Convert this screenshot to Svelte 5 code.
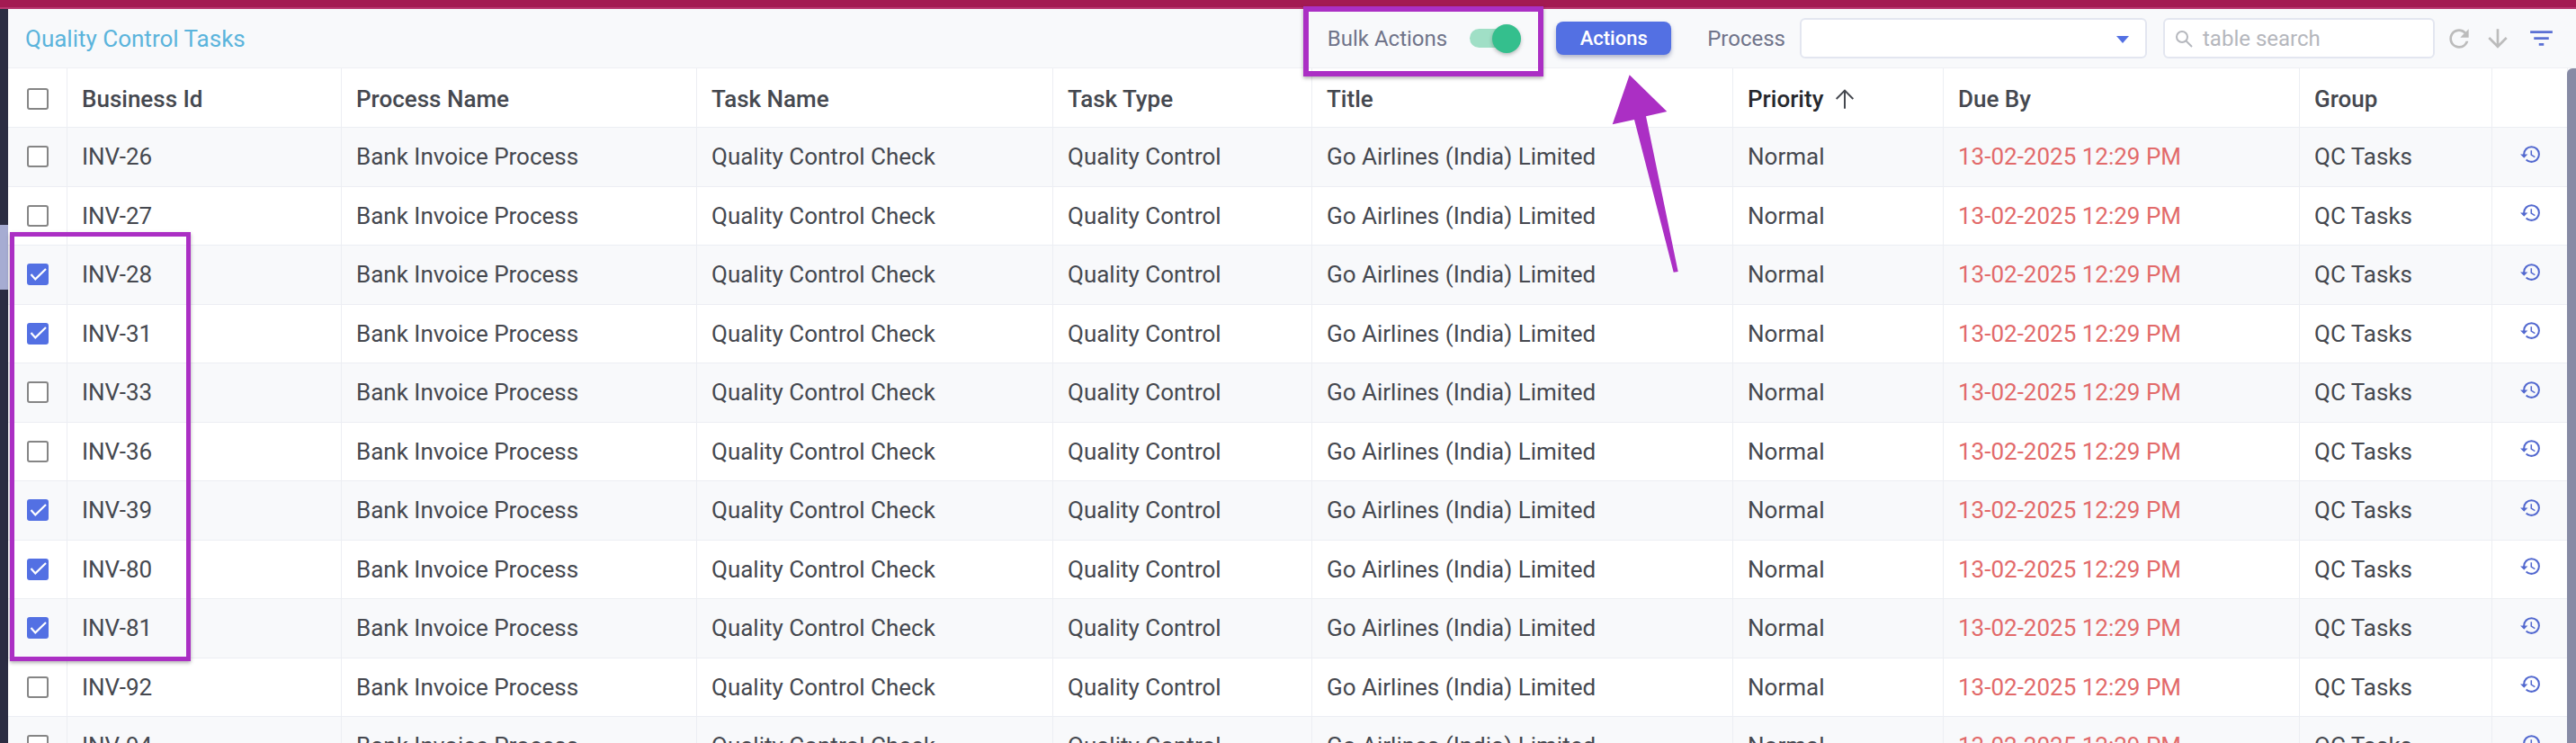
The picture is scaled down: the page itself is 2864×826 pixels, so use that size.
<script>
  const ids = ['INV-26','INV-27','INV-28','INV-31','INV-33','INV-36','INV-39','INV-80','INV-81','INV-92','INV-94'];
  const checked = new Set(['INV-28','INV-31','INV-39','INV-80','INV-81']);
  const heads = ['Business Id','Process Name','Task Name','Task Type','Title','Priority','Due By','Group',''];
</script>

<div class="page">
  <div class="topbar"></div>
  <div class="body">
    <div class="strip"></div>
    <div class="main">
      <div class="toolbar">
        <span class="heading">Quality Control Tasks</span>
        <div class="tools">
          <span class="lbl bulk">Bulk Actions</span>
          <span class="toggle"><i></i></span>
          <button class="action">Actions</button>
          <span class="lbl">Process</span>
          <div class="field select"><span class="caret"></span></div>
          <div class="field search">
            <svg viewBox="0 0 20 20" width="20" height="20" fill="none" stroke="#b5b7bd" stroke-width="2"><circle cx="8" cy="8" r="6"/><path d="M12.5 12.5 19 19"/></svg>
            <span>table search</span>
          </div>
          <svg class="ic" viewBox="0 0 24 24" width="32" height="32" fill="#bcbcbc"><path d="M17.65 6.35A7.958 7.958 0 0 0 12 4c-4.42 0-7.99 3.58-7.99 8s3.57 8 7.99 8c3.73 0 6.84-2.55 7.73-6h-2.08A5.99 5.99 0 0 1 12 18c-3.31 0-6-2.69-6-6s2.69-6 6-6c1.66 0 3.14.69 4.22 1.78L13 11h7V4l-2.35 2.35z"/></svg>
          <svg class="ic" viewBox="0 0 24 24" width="32" height="32" fill="#bcbcbc"><path d="M20 12l-1.41-1.41L13 16.17V4h-2v12.17l-5.58-5.59L4 12l8 8 8-8z"/></svg>
          <svg class="ic filter" viewBox="0 0 24 24" width="33" height="33" fill="#5a70d4"><path d="M10 18h4v-2h-4v2zM3 6v2h18V6H3zm3 7h12v-2H6v2z"/></svg>
        </div>
      </div>
      <div class="table">
        <div class="row head">
          <div class="cell chk"><span class="box"></span></div>
          {#each heads as h}
            <div class="cell" class:sorted={h === 'Priority'}>
              {h}
              {#if h === 'Priority'}
                <svg viewBox="0 0 24 24" width="32" height="32" fill="none" stroke="#45484f" stroke-width="1.5"><path d="M12 20V5M5 12l7-7 7 7"/></svg>
              {/if}
            </div>
          {/each}
        </div>
        {#each ids as id}
          <div class="row">
            <div class="cell chk">
              <span class="box" class:on={checked.has(id)}>
                {#if checked.has(id)}
                  <svg viewBox="0 0 24 24" width="24" height="24" fill="none" stroke="#fff" stroke-width="2.2"><path d="M4.5 12l4.8 5.4L21 6"/></svg>
                {/if}
              </span>
            </div>
            <div class="cell">{id}</div>
            <div class="cell">Bank Invoice Process</div>
            <div class="cell">Quality Control Check</div>
            <div class="cell">Quality Control</div>
            <div class="cell">Go Airlines (India) Limited</div>
            <div class="cell">Normal</div>
            <div class="cell due">13-02-2025 12:29 PM</div>
            <div class="cell">QC Tasks</div>
            <div class="cell icon">
              <svg viewBox="0 0 24 24" width="25" height="25" fill="#5268cf"><path d="M13 3a9 9 0 0 0-9 9H1l3.89 3.89.07.14L9 12H6c0-3.87 3.13-7 7-7s7 3.13 7 7-3.13 7-7 7c-1.93 0-3.68-.79-4.94-2.06l-1.42 1.42A8.954 8.954 0 0 0 13 21a9 9 0 0 0 0-18zm-1 5v5l4.28 2.54.72-1.21-3.5-2.08V8H12z"/></svg>
            </div>
          </div>
        {/each}
      </div>
    </div>
    <div class="scrollbar"></div>
  </div>

  <div class="mark mark-a"></div>
  <div class="mark mark-b"></div>
  <svg class="arrow" viewBox="0 0 2864 826" width="2864" height="826">
    <path d="M1811.7 83.3 1792.7 138.3 1817 133 1860.7 302.7 1865.7 302 1830 129.3 1853.3 124Z" fill="#ab2fc4"/>
  </svg>
</div>

<style>
  :global(body) { margin: 0; background: #fff; }
  .page {
    position: relative;
    width: 2864px;
    height: 826px;
    overflow: hidden;
    font-family: Roboto, "Liberation Sans", sans-serif;
    font-size: 26px;
    color: #45484f;
    background: #fff;
  }
  .topbar {
    height: 8px;
    background: #a31a52;
    border-bottom: 2px solid #b8366f;
  }
  .body { display: flex; height: 816px; }
  .strip {
    flex: 0 0 9px;
    background: linear-gradient(#2b2d42 0 240px, #a6acd2 240px 312px, #2b2d42 312px);
  }
  .main { flex: 1; min-width: 0; }
  .toolbar {
    height: 66px;
    box-sizing: border-box;
    display: flex;
    align-items: center;
    justify-content: space-between;
    padding: 0 22px 0 19px;
    background: #f8f9fb;
    border-bottom: 1px solid #eef0f4;
  }
  .heading { color: #5bb4dc; font-size: 26px; }
  .tools { display: flex; align-items: center; }
  .lbl { color: #70748a; font-size: 24px; }
  .bulk { margin-right: 25px; }
  .toggle {
    position: relative;
    width: 56px;
    height: 21px;
    border-radius: 11px;
    background: #a0dfc6;
    margin-right: 40px;
  }
  .toggle i {
    position: absolute;
    right: -1px;
    top: -5px;
    width: 32px;
    height: 32px;
    border-radius: 50%;
    background: #34bf8d;
    box-shadow: 0 2px 4px rgba(0,0,0,.25);
  }
  .action {
    width: 128px;
    height: 37px;
    border: 0;
    border-radius: 8px;
    background: #5370e3;
    color: #fff;
    font: 500 22px Roboto, sans-serif;
    box-shadow: 0 3px 5px rgba(40,50,110,.35);
    margin-right: 40px;
  }
  .field {
    box-sizing: border-box;
    height: 45px;
    background: #fff;
    border: 2px solid #e3e6f0;
    border-radius: 6px;
    display: flex;
    align-items: center;
  }
  .select { width: 386px; margin-left: 16px; margin-right: 18px; position: relative; }
  .caret {
    position: absolute;
    right: 18px;
    top: 18px;
    border: 7px solid transparent;
    border-top: 8px solid #5370e3;
    border-bottom: 0;
  }
  .search { width: 302px; padding-left: 11px; gap: 11px; color: #b5b7bd; font-size: 24px; margin-right: 11px; }
  .ic { display: block; margin-right: 11px; }
  .filter { margin-left: 5px; margin-right: 0; }
  .row {
    display: grid;
    grid-template-columns: 66px 305px 395px 396px 288px 468px 234px 396px 214px 84px;
    height: 65.5px;
    box-sizing: border-box;
    border-bottom: 1px solid #eceef3;
  }
  .row:nth-child(even) { background: #f8f9fb; }
  .head { height: 66px; font-weight: 500; background: #fff; padding-top: 2px; }
  .head .cell { margin-top: -2px; padding-top: 2px; }
  .cell {
    display: flex;
    align-items: center;
    padding-left: 16px;
    border-right: 1px solid #eceef3;
    white-space: nowrap;
    min-width: 0;
  }
  .chk { padding-left: 21px; }
  .sorted { color: #26282d; gap: 8px; }
  .due { color: #e26a6a; }
  .icon { border-right: 0; padding-left: 30px; padding-bottom: 6px; }
  .box {
    box-sizing: border-box;
    width: 24px;
    height: 24px;
    border: 2.5px solid #858585;
    border-radius: 3px;
    background: #fff;
    display: block;
  }
  .box.on { background: #5370e3; border-color: #5370e3; position: relative; }
  .box.on svg { position: absolute; left: -2.5px; top: -2.5px; }
  .scrollbar {
    position: absolute;
    left: 2854px;
    top: 76px;
    width: 10px;
    height: 750px;
    background: #878ba5;
    border-radius: 6px 0 0 0;
  }
  .mark {
    position: absolute;
    box-sizing: border-box;
    border: 5.5px solid #ab2fc4;
    box-shadow: 0 2px 4px rgba(0,0,0,.3);
  }
  .mark-a { left: 1449px; top: 7px; width: 267px; height: 78px; border-width: 6px; }
  .mark-b { left: 11px; top: 258px; width: 201px; height: 477px; }
  .arrow { position: absolute; left: 0; top: 0; pointer-events: none; }
</style>
